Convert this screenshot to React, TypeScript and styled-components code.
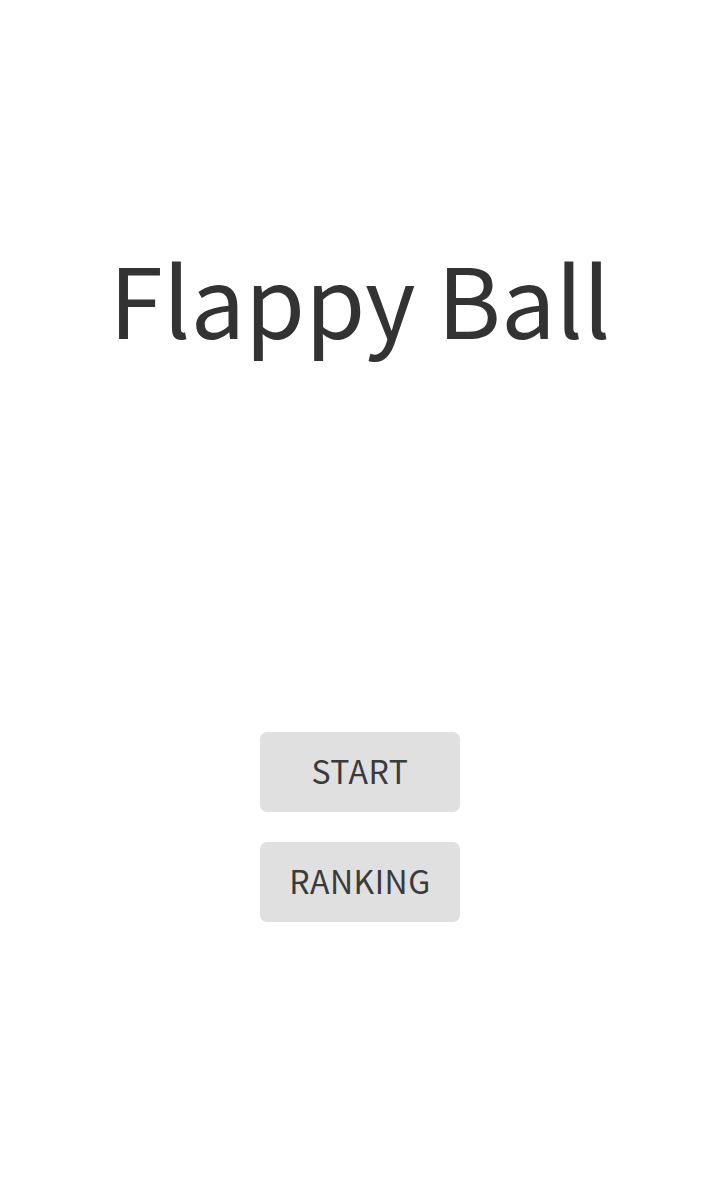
import React from "react";
import styled, { createGlobalStyle } from "styled-components";

const GlobalStyle = createGlobalStyle`
  html, body {
    margin: 0;
    padding: 0;
    background: #ffffff;
  }
  body {
    font-family: "Noto Sans CJK KR", "Noto Sans", sans-serif;
    color: #333333;
  }
`;

const Screen = styled.div`
  width: 720px;
  height: 1200px;
  display: flex;
  flex-direction: column;
  align-items: center;
`;

const Title = styled.h1`
  margin: 248px 0 0;
  font-size: 97px;
  font-weight: 400;
  line-height: 1;
  color: #333333;
`;

const Menu = styled.div`
  margin-top: 387px;
  display: flex;
  flex-direction: column;
  gap: 30px;
`;

const MenuButton = styled.button`
  width: 200px;
  height: 80px;
  border: none;
  border-radius: 7px;
  background: #e0e0e0;
  color: #3a3a3a;
  font-family: inherit;
  font-size: 32px;
  letter-spacing: 0.5px;
  line-height: 1;
  display: flex;
  align-items: center;
  justify-content: center;
  padding: 0 0 5px;
  cursor: pointer;
`;

function App() {
  return (
    <>
      <GlobalStyle />
      <Screen>
        <Title>Flappy Ball</Title>
        <Menu>
          <MenuButton>START</MenuButton>
          <MenuButton>RANKING</MenuButton>
        </Menu>
      </Screen>
    </>
  );
}

export default App;
